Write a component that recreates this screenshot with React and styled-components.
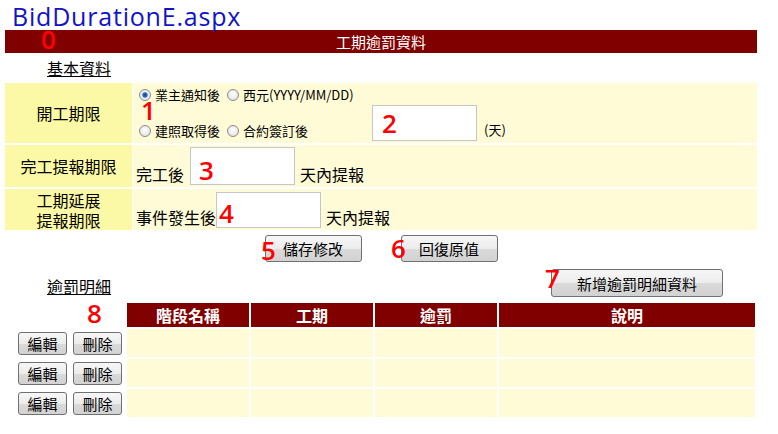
import styled, { createGlobalStyle } from "styled-components";

const GlobalStyle = createGlobalStyle`
  body {
    margin: 0;
    background: #ffffff;
    font-family: "Noto Sans CJK TC", "Noto Sans", sans-serif;
    color: #000000;
  }
`;

const color = {
  maroon: "#800000",
  label: "#fbf9a6",
  cell: "#fffbd6",
  title: "#1212c8",
  mark: "#ff0000",
};

const Page = styled.div`
  position: relative;
  width: 752px;
  padding: 0 0 20px 5px;
`;

const Title = styled.h1`
  margin: 0;
  height: 30px;
  padding-left: 7px;
  font-family: "Open Sans", "Noto Sans", sans-serif;
  font-weight: 400;
  font-size: 25px;
  line-height: 32px;
  letter-spacing: 0.8px;
  color: ${color.title};
`;

const Banner = styled.div`
  height: 23px;
  background: ${color.maroon};
  color: #ffffff;
  text-align: center;
  font-size: 15px;
  line-height: 23px;
`;

const SectionTitle = styled.div`
  margin: ${(p) => p.$margin || "4px 0 4px 42px"};
  font-size: 16px;
  line-height: 22px;
  text-decoration: underline;
`;

const FormGrid = styled.div`
  display: grid;
  grid-template-columns: 127px 1fr;
  grid-template-rows: 60px 42px 41px;
  gap: 2px 1px;
`;

const Label = styled.div`
  background: ${color.label};
  display: flex;
  align-items: center;
  justify-content: center;
  text-align: center;
  font-size: 16px;
  line-height: 20px;
`;

const Value = styled.div`
  background: ${color.cell};
  display: flex;
  align-items: flex-end;
  padding: 0 0 1px 3px;
`;

const RadioGroup = styled.div`
  width: 236px;
  align-self: stretch;
  display: flex;
  flex-direction: column;
  justify-content: space-between;
  padding: 3px 0 2px;
`;

const RadioLine = styled.div`
  display: flex;
  align-items: center;
  height: 18px;
`;

const RadioLabel = styled.label`
  display: inline-flex;
  align-items: center;
  margin-right: 4px;
  font-size: 13px;
  line-height: 18px;
  white-space: nowrap;
`;

const Radio = styled.input.attrs({ type: "radio" })`
  appearance: none;
  width: 12px;
  height: 12px;
  margin: 0 4px 0 3px;
  border: 1px solid #8a8a8a;
  border-radius: 50%;
  background: radial-gradient(circle at 50% 40%, #ffffff 0%, #e6e6e6 70%, #d0d0d0 100%);

  &:checked {
    background: radial-gradient(circle, #17407a 0%, #2c6cb8 30%, #dfe9f5 45%, #f4f4f4 100%);
  }
`;

const DayInput = styled.input.attrs({ type: "text" })`
  box-sizing: border-box;
  width: 105px;
  height: ${(p) => p.$h || 36}px;
  margin: 0 0 ${(p) => p.$mb || 1}px;
  border: 1px solid #c6c6c6;
  background: #ffffff;
  outline: none;
`;

const Text = styled.span`
  font-size: ${(p) => p.$size || 16}px;
  line-height: 20px;
  margin: 0 ${(p) => p.$right || 0}px 2px ${(p) => p.$left || 0}px;
  white-space: nowrap;
`;

const ButtonRow = styled.div`
  display: flex;
  justify-content: center;
  gap: 39px;
  margin-top: 5px;
`;

const Button = styled.button`
  box-sizing: border-box;
  width: ${(p) => p.$w}px;
  height: ${(p) => p.$h || 27}px;
  padding: 0;
  border: 1px solid #707070;
  border-radius: 3px;
  background: linear-gradient(180deg, #f7f7f7 0%, #ececec 50%, #dadada 51%, #d2d2d2 100%);
  font-family: "Noto Sans CJK TC", sans-serif;
  font-size: 15px;
  line-height: 1;
  color: #000000;
`;

const DetailBar = styled.div`
  display: flex;
  justify-content: space-between;
  align-items: flex-end;
  margin-top: 7px;
  padding-right: 34px;
`;

const DetailGrid = styled.div`
  display: grid;
  width: 750px;
  margin-top: 6px;
  grid-template-columns: 120px 122px 122px 122px 1fr;
  grid-auto-rows: 28px;
  grid-template-rows: 24px;
  gap: 2px 2px;
`;

const HeadCell = styled.div`
  background: ${(p) => (p.$blank ? "transparent" : color.maroon)};
  color: #ffffff;
  font-weight: 700;
  font-size: 16px;
  display: flex;
  align-items: center;
  justify-content: center;
`;

const ActionCell = styled.div`
  display: flex;
  align-items: center;
  justify-content: flex-end;
  gap: 6px;
  padding-right: 3px;
`;

const DataCell = styled.div`
  background: ${color.cell};
`;

const Mark = styled.span`
  position: absolute;
  left: ${(p) => p.$x}px;
  top: ${(p) => p.$y}px;
  font-family: "Open Sans", sans-serif;
  font-weight: 600;
  font-size: 26px;
  line-height: 1;
  color: ${color.mark};
  pointer-events: none;
`;

const marks = [
  ["0", 41, 26],
  ["1", 141, 97],
  ["2", 382, 110],
  ["3", 199, 157],
  ["4", 219, 200],
  ["5", 261, 237],
  ["6", 391, 235],
  ["7", 545, 265],
  ["8", 87, 300],
];

const columns = ["階段名稱", "工期", "逾罰", "說明"];

const App = () => {
  return (
    <>
      <GlobalStyle />
      <Page>
        <Title>BidDurationE.aspx</Title>
        <Banner>工期逾罰資料</Banner>
        <SectionTitle>基本資料</SectionTitle>

        <FormGrid>
          <Label>開工期限</Label>
          <Value>
            <RadioGroup>
              <RadioLine>
                <RadioLabel>
                  <Radio name="start" defaultChecked />
                  業主通知後
                </RadioLabel>
                <RadioLabel>
                  <Radio name="start" />
                  西元(YYYY/MM/DD)
                </RadioLabel>
              </RadioLine>
              <RadioLine>
                <RadioLabel>
                  <Radio name="start" />
                  建照取得後
                </RadioLabel>
                <RadioLabel>
                  <Radio name="start" />
                  合約簽訂後
                </RadioLabel>
              </RadioLine>
            </RadioGroup>
            <DayInput $h={36} $mb={1} />
            <Text $size={13} $left={7}>(天)</Text>
          </Value>

          <Label>完工提報期限</Label>
          <Value>
            <Text $right={6}>完工後</Text>
            <DayInput $h={38} $mb={0} />
            <Text $left={5}>天內提報</Text>
          </Value>

          <Label>
            工期延展
            <br />
            提報期限
          </Label>
          <Value>
            <Text>事件發生後</Text>
            <DayInput $h={36} $mb={1} />
            <Text $left={5}>天內提報</Text>
          </Value>
        </FormGrid>

        <ButtonRow>
          <Button $w={97}>儲存修改</Button>
          <Button $w={97}>回復原值</Button>
        </ButtonRow>

        <DetailBar>
          <SectionTitle $margin="0 0 0 42px">逾罰明細</SectionTitle>
          <Button $w={172} $h={28}>新增逾罰明細資料</Button>
        </DetailBar>

        <DetailGrid>
          <HeadCell $blank />
          {columns.map((c) => (
            <HeadCell key={c}>{c}</HeadCell>
          ))}
          {[0, 1, 2].map((r) => (
            <>
              <ActionCell key={`a${r}`}>
                <Button $w={49} $h={23}>編輯</Button>
                <Button $w={49} $h={23}>刪除</Button>
              </ActionCell>
              {columns.map((c) => (
                <DataCell key={`${r}${c}`} />
              ))}
            </>
          ))}
        </DetailGrid>

        {marks.map(([n, x, y]) => (
          <Mark key={n} $x={x} $y={y}>
            {n}
          </Mark>
        ))}
      </Page>
    </>
  );
};

export default App;
